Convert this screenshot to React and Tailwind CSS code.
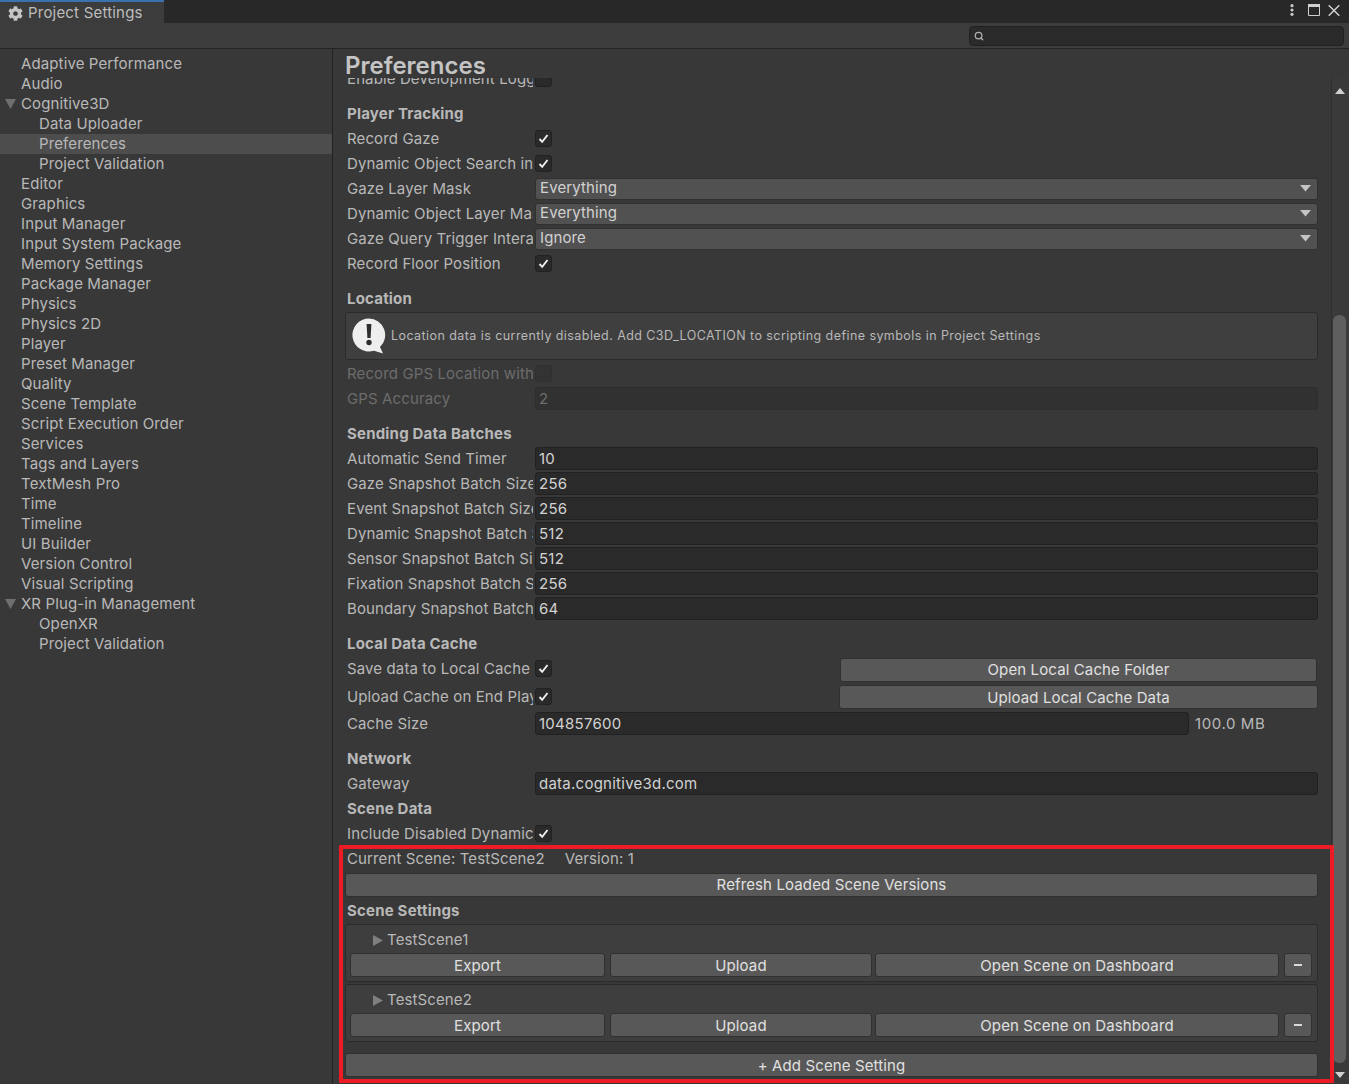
import { FaCog } from "react-icons/fa";
import { Search } from "lucide-react";

const treeItems = [
  { name: "Adaptive Performance" },
  { name: "Audio" },
  { name: "Cognitive3D", open: true },
  { name: "Data Uploader", child: true },
  { name: "Preferences", child: true, selected: true },
  { name: "Project Validation", child: true },
  { name: "Editor" },
  { name: "Graphics" },
  { name: "Input Manager" },
  { name: "Input System Package" },
  { name: "Memory Settings" },
  { name: "Package Manager" },
  { name: "Physics" },
  { name: "Physics 2D" },
  { name: "Player" },
  { name: "Preset Manager" },
  { name: "Quality" },
  { name: "Scene Template" },
  { name: "Script Execution Order" },
  { name: "Services" },
  { name: "Tags and Layers" },
  { name: "TextMesh Pro" },
  { name: "Time" },
  { name: "Timeline" },
  { name: "UI Builder" },
  { name: "Version Control" },
  { name: "Visual Scripting" },
  { name: "XR Plug-in Management", open: true },
  { name: "OpenXR", child: true },
  { name: "Project Validation", child: true },
];

const batchRows = [
  ["Automatic Send Timer", "10"],
  ["Gaze Snapshot Batch Size", "256"],
  ["Event Snapshot Batch Size", "256"],
  ["Dynamic Snapshot Batch Size", "512"],
  ["Sensor Snapshot Batch Size", "512"],
  ["Fixation Snapshot Batch Size", "256"],
  ["Boundary Snapshot Batch Size", "64"],
];

function Label({ children, disabled }) {
  return (
    <div className={`w-[186px] mr-[2px] pt-[2px] shrink-0 overflow-hidden whitespace-nowrap ${disabled ? "text-[#6c6c6c]" : "text-[#b8b8b8]"}`}>
      {children}
    </div>
  );
}

function Heading({ children, className = "" }) {
  return <div className={`h-[25px] pt-[2px] flex items-center font-bold tracking-[0.2px] text-[#b8b8b8] ${className}`}>{children}</div>;
}

function Checkbox({ checked, disabled }) {
  return (
    <div className={`w-[17px] h-[17px] shrink-0 rounded-[3px] border flex items-center justify-center ${disabled ? "bg-[#333333] border-[#303030]" : "bg-[#2a2a2a] border-[#212121]"}`}>
      {checked && (
        <svg width="11" height="11" viewBox="0 0 11 11" fill="none">
          <path d="M1.5 6 L4.2 8.8 L9.5 2" stroke="#eeeeee" strokeWidth="1.9" />
        </svg>
      )}
    </div>
  );
}

function CheckRow({ label, checked, disabled, right }) {
  return (
    <div className="h-[25px] flex items-center">
      <Label disabled={disabled}>{label}</Label>
      <Checkbox checked={checked} disabled={disabled} />
      {right}
    </div>
  );
}

function Dropdown({ label, value }) {
  return (
    <div className="h-[25px] flex items-center">
      <Label>{label}</Label>
      <div className="flex-1 h-[22px] rounded-[3px] bg-[#515151] border border-[#303030] flex items-center justify-between pl-1 pr-[6px] text-[#d2d2d2]">
        <span>{value}</span>
        <svg width="11" height="7" viewBox="0 0 11 7">
          <path d="M0 0 H11 L5.5 6.5 Z" fill="#c4c4c4" />
        </svg>
      </div>
    </div>
  );
}

function TextBox({ value, disabled }) {
  return (
    <div className={`flex-1 h-[23px] pt-[2px] rounded-[3px] border flex items-center pl-[3px] tracking-[0.25px] ${disabled ? "bg-[#313131] border-[#2d2d2d] text-[#6c6c6c]" : "bg-[#2a2a2a] border-[#212121] text-[#d2d2d2]"}`}>
      {value}
    </div>
  );
}

function Field({ label, value, disabled }) {
  return (
    <div className="h-[25px] flex items-center">
      <Label disabled={disabled}>{label}</Label>
      <TextBox value={value} disabled={disabled} />
    </div>
  );
}

function Btn({ children, className = "" }) {
  return (
    <div className={`h-[24px] shrink-0 rounded-[3px] bg-[#585858] border border-[#303030] flex items-center justify-center text-[#e0e0e0] ${className}`}>
      {children}
    </div>
  );
}

function SceneBox({ name }) {
  return (
    <div className="h-[58px] rounded-[3px] bg-[#3e3e3e] border border-[#2b2b2b] pl-[4px] flex flex-col mb-[2px]">
      <div className="h-[28px] pt-[2px] flex items-center pl-[23px] text-[#b8b8b8] shrink-0">
        <svg width="10" height="11" viewBox="0 0 10 11" className="mr-[4px]">
          <path d="M0 0 L10 5.5 L0 11 Z" fill="#7f7f7f" />
        </svg>
        {name}
      </div>
      <div className="flex">
        <Btn className="w-[255px] pt-[2px]">Export</Btn>
        <Btn className="w-[262px] ml-[5px] pt-[2px]">Upload</Btn>
        <Btn className="w-[404px] ml-[3px] pt-[2px]">Open Scene on Dashboard</Btn>
        <Btn className="w-[28px] ml-[5px] pr-[1px]">
          <span className="block w-[8px] h-[2px] bg-[#d8d8d8]" />
        </Btn>
      </div>
    </div>
  );
}

function Sidebar() {
  return (
    <div className="w-[333px] shrink-0 border-r border-[#232323] pt-[5px] bg-[#383838] overflow-hidden">
      {treeItems.map((item, i) => (
        <div
          key={i}
          className={`h-[20px] flex items-center relative text-[#b8b8b8] ${item.child ? "pl-[39px]" : "pl-[21px]"} ${item.selected ? "bg-[#4d4d4d]" : ""}`}
        >
          {item.open && (
            <svg width="11" height="10" viewBox="0 0 11 10" className="absolute left-[5px] top-[5px]">
              <path d="M0 0 H11 L5.5 10 Z" fill="#6f6f6f" />
            </svg>
          )}
          {item.name}
        </div>
      ))}
    </div>
  );
}

function Scrollbar() {
  return (
    <div className="w-[18px] shrink-0 border-l border-[#2f2f2f] pl-[1px] bg-[#3a3a3a]">
      <div className="w-[13px] flex flex-col items-center">
        <svg width="10" height="6" viewBox="0 0 10 6" className="mt-[10px] shrink-0">
          <path d="M0 6 L5 0 L10 6 Z" fill="#d0d0d0" />
        </svg>
        <div className="mt-[221px] w-[13px] h-[748px] rounded-[6px] bg-[#5f5f5f] shrink-0" />
        <svg width="10" height="6" viewBox="0 0 10 6" className="mt-[9px] shrink-0">
          <path d="M0 0 H10 L5 6 Z" fill="#d0d0d0" />
        </svg>
      </div>
    </div>
  );
}

export default function App() {
  return (
    <div className="w-[1349px] h-[1084px] overflow-hidden relative flex flex-col bg-[#383838] text-[15px] tracking-[0.12px] font-['Inter',sans-serif]">
      {/* tab bar */}
      <div className="h-[23px] shrink-0 bg-[#282828] flex justify-between">
        <div className="w-[164px] bg-[#3c3c3c] border-t-2 border-[#3a72b0] flex items-center pl-2 pt-[2px] tracking-[0.2px] text-[#bdbdbd]">
          <FaCog size={15} className="mr-[5px] text-[#c4c4c4]" />
          Project Settings
        </div>
        <div className="flex items-center pr-[9px] pb-[3px]">
          <svg width="4" height="12" viewBox="0 0 4 12">
            <circle cx="2" cy="1.7" r="1.6" fill="#c8c8c8" />
            <circle cx="2" cy="6" r="1.6" fill="#c8c8c8" />
            <circle cx="2" cy="10.3" r="1.6" fill="#c8c8c8" />
          </svg>
          <svg width="12" height="12" viewBox="0 0 12 12" className="ml-[14px]">
            <path d="M0.5 0.5 H11.5 V11.5 H0.5 Z" fill="none" stroke="#d0d0d0" />
            <path d="M0 0 H12 V3 H0 Z" fill="#d0d0d0" />
          </svg>
          <svg width="12" height="11" viewBox="0 0 12 11" className="ml-[8px]">
            <path d="M0.7 0.3 L11.3 10.7 M11.3 0.3 L0.7 10.7" stroke="#d0d0d0" strokeWidth="1.5" fill="none" />
          </svg>
        </div>
      </div>

      {/* toolbar */}
      <div className="h-[26px] shrink-0 bg-[#3c3c3c] border-b border-[#232323] flex justify-end items-start pr-[5px] pt-[3px]">
        <div className="w-[375px] h-[20px] rounded-[4px] bg-[#2a2a2a] border border-[#212121] flex items-center pl-[4px]">
          <Search size={10} strokeWidth={3} className="text-[#b0b0b0]" />
        </div>
      </div>

      <div className="flex-1 flex min-h-0">
        <Sidebar />

        <div className="flex-1 min-w-0 flex flex-col">
          <div className="h-[29px] shrink-0 pl-3 text-[24px] leading-[34px] font-semibold tracking-normal text-[#c4c4c4] relative z-10">
            Preferences
          </div>
          <div className="flex-1 min-h-0 flex">
            <div className="flex-1 min-w-0 overflow-hidden pl-[14px] pr-[13px]">
              <div className="-mt-[12px]">
                <CheckRow label="Enable Development Logging" />

                <Heading className="mt-[10px]">Player Tracking</Heading>
                <CheckRow label="Record Gaze" checked />
                <CheckRow label="Dynamic Object Search in Parent" checked />
                <Dropdown label="Gaze Layer Mask" value="Everything" />
                <Dropdown label="Dynamic Object Layer Mask" value="Everything" />
                <Dropdown label="Gaze Query Trigger Interaction" value="Ignore" />
                <CheckRow label="Record Floor Position" checked />

                <Heading className="mt-[10px]">Location</Heading>
                <div className="-ml-[2px] mt-[1px] h-[48px] rounded-[3px] bg-[#3f3f3f] border border-[#2b2b2b] flex items-center pl-[6px] text-[12.5px] tracking-[0.43px] text-[#b8b8b8]">
                  <svg width="34" height="36" viewBox="0 0 34 36" className="mr-[5px] shrink-0">
                    <path d="M17 0.5 A16.5 16.5 0 1 0 22 32.7 L31 35.5 L28 29 A16.5 16.5 0 0 0 17 0.5 Z" fill="#eeeeee" />
                    <path d="M14.6 6 H19.4 L18.6 20 H15.4 Z" fill="#2d2d2d" />
                    <circle cx="17" cy="24.5" r="2.7" fill="#2d2d2d" />
                  </svg>
                  Location data is currently disabled. Add C3D_LOCATION to scripting define symbols in Project Settings
                </div>
                <div className="mt-[1px]">
                  <CheckRow label="Record GPS Location with Gaze" disabled />
                  <Field label="GPS Accuracy" value="2" disabled />
                </div>

                <Heading className="mt-[10px]">Sending Data Batches</Heading>
                {batchRows.map(([label, value]) => (
                  <Field key={label} label={label} value={value} />
                ))}

                <Heading className="mt-[10px]">Local Data Cache</Heading>
                <CheckRow
                  label="Save data to Local Cache"
                  checked
                  right={<Btn className="ml-[288px] mt-[2px] pt-[2px] w-[477px]">Open Local Cache Folder</Btn>}
                />
                <div className="mt-[3px]">
                  <CheckRow
                    label="Upload Cache on End Play"
                    checked
                    right={<Btn className="ml-[287px] pt-[4px] w-[479px]">Upload Local Cache Data</Btn>}
                  />
                </div>
                <div className="h-[25px] mt-[2px] flex items-center">
                  <Label>Cache Size</Label>
                  <TextBox value="104857600" />
                  <div className="w-[129px] pl-[6px] pt-[1px] text-[#b8b8b8] tracking-[0.6px]">100.0 MB</div>
                </div>

                <Heading className="mt-[10px]">Network</Heading>
                <Field label="Gateway" value="data.cognitive3d.com" />
                <Heading>Scene Data</Heading>
                <CheckRow label="Include Disabled Dynamic Objects" checked />

                <div className="h-[25px] pt-[2px] flex items-center text-[#b8b8b8]">
                  <span className="mr-5">Current Scene: TestScene2</span>
                  <span>Version: 1</span>
                </div>
                <div className="-ml-[2px] mt-[2px]">
                  <Btn>Refresh Loaded Scene Versions</Btn>
                </div>
                <Heading className="mt-[1px]">Scene Settings</Heading>
                <div className="-ml-[2px] mt-[1px]">
                  <SceneBox name="TestScene1" />
                  <SceneBox name="TestScene2" />
                  <Btn className="mt-[11px] pt-[2px]">+ Add Scene Setting</Btn>
                </div>
              </div>
            </div>
            <Scrollbar />
          </div>
        </div>
      </div>

      {/* annotation around the scene section */}
      <div className="absolute left-[339px] top-[845px] w-[995px] h-[238px] border-[4px] border-[#ed1c24] pointer-events-none" />
    </div>
  );
}
